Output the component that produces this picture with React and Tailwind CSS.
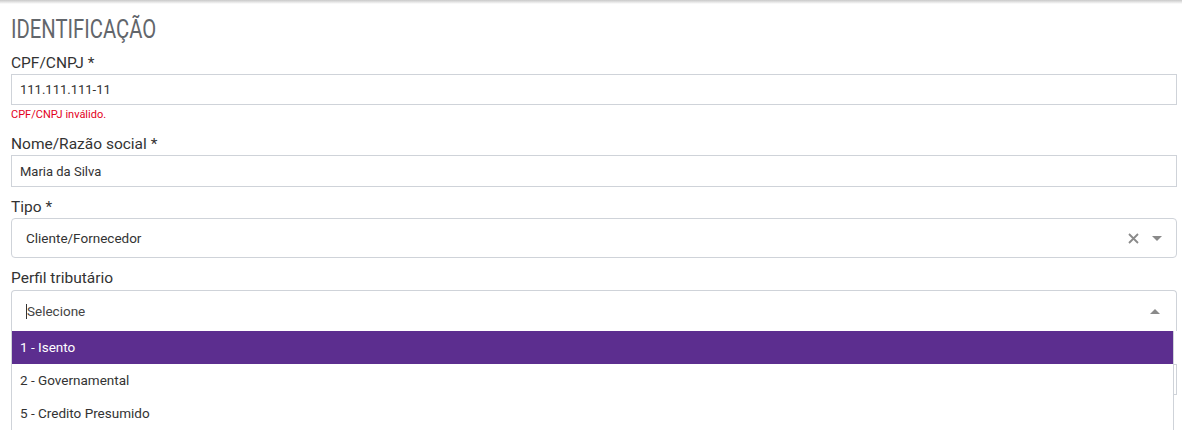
import { useState } from 'react';

const opcoesPerfil = [
  { id: 1, label: '1 - Isento' },
  { id: 2, label: '2 - Governamental' },
  { id: 5, label: '5 - Credito Presumido' },
];

const Label = ({ children, className = '' }) => (
  <label className={`block h-[20px] text-[15.5px] leading-[20px] text-[#333] ${className}`}>{children}</label>
);

const App = () => {
  const [cpf, setCpf] = useState('111.111.111-11');
  const [nome, setNome] = useState('Maria da Silva');
  const [ativo, setAtivo] = useState(1);

  return (
    <div className="relative h-[434px] w-full overflow-hidden bg-white font-['Roboto',sans-serif]">
      {/* sombra do topo */}
      <div className="h-[4px] bg-gradient-to-b from-[#c9c9c9] to-white" />

      <div className="px-[11px]">
        <h2 className="origin-left scale-x-[0.81] pt-[10px] text-[25px] leading-[32px] text-[#62666b]">IDENTIFICAÇÃO</h2>

        {/* CPF/CNPJ */}
        <Label className="mt-[7px]">CPF/CNPJ *</Label>
        <input
          value={cpf}
          onChange={(e) => setCpf(e.target.value)}
          className="mt-[1px] block h-[31px] w-[1166px] border border-[#cfd3d9] px-[8px] text-[13px] text-[#333] outline-none"
        />
        <p className="mt-[3px] h-[14px] text-[11px] leading-[14px] text-[#e3001b]">CPF/CNPJ inválido.</p>

        {/* Nome */}
        <Label className="mt-[12px]">Nome/Razão social *</Label>
        <input
          value={nome}
          onChange={(e) => setNome(e.target.value)}
          className="mt-[1px] block h-[32px] w-[1166px] border border-[#cfd3d9] px-[8px] text-[13px] text-[#333] outline-none"
        />

        {/* Tipo */}
        <Label className="mt-[10px]">Tipo *</Label>
        <div className="mt-[1px] flex h-[40px] w-[1166px] items-center rounded-[4px] border border-[#cfd3d9] pl-[14px] pr-[14px] text-[13.5px] text-[#333]">
          <span className="flex-1">Cliente/Fornecedor</span>
          <svg className="mr-[13px]" width="11" height="11" viewBox="0 0 11 11">
            <path d="M1 1l9 9M10 1l-9 9" stroke="#8a8a8a" strokeWidth="1.8" />
          </svg>
          <svg width="10" height="5" viewBox="0 0 10 5"><path d="M0 0h10L5 5z" fill="#8a8a8a" /></svg>
        </div>

        {/* Perfil tributário */}
        <Label className="mt-[10px]">Perfil tributário</Label>
        <div className="relative mt-[2px] w-[1166px]">
          <div className="flex h-[41px] items-center rounded-t-[4px] border border-b-0 border-[#cfd3d9] pl-[14px] pr-[16px] text-[13.5px] text-[#444]">
            <span className="h-[15px] w-px bg-[#333]" />
            <span className="flex-1">Selecione</span>
            <svg width="10" height="5" viewBox="0 0 10 5"><path d="M0 5h10L5 0z" fill="#8a8a8a" /></svg>
          </div>

          {/* proximo campo, coberto pelo menu */}
          <div className="mt-[13px] h-[20px]" />
          <div className="h-[31px] border border-[#cfd3d9]" />

          {/* menu aberto */}
          <ul className="absolute left-0 top-[41px] w-[1163px] border-x border-[#cfd3d9] bg-white text-[13.5px]">
            {opcoesPerfil.map((op) => (
              <li
                key={op.id}
                onMouseEnter={() => setAtivo(op.id)}
                className={`flex h-[33px] items-center px-[8px] ${ativo === op.id ? 'bg-[#5c2e8f] text-white' : 'text-[#333]'}`}
              >
                {op.label}
              </li>
            ))}
          </ul>
        </div>
      </div>
    </div>
  );
};

export default App;
